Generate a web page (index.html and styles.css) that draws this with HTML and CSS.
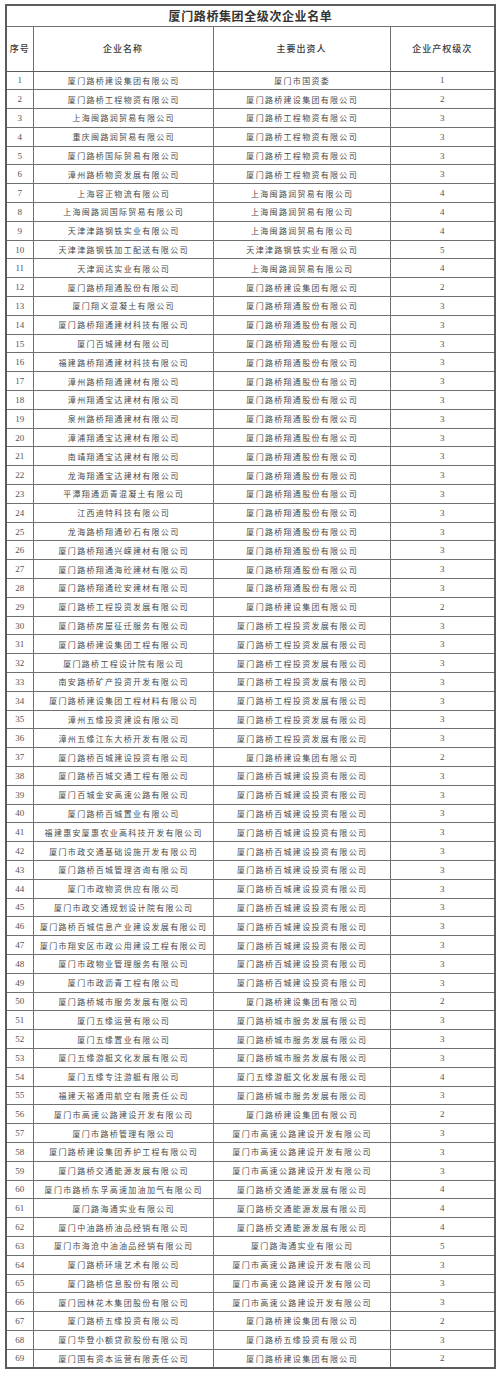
FILE: index.html
```html
<!DOCTYPE html>
<html lang="zh-CN">
<head>
<meta charset="utf-8">
<title>厦门路桥集团全级次企业名单</title>
<link rel="stylesheet" href="styles.css">
</head>
<body>
<table class="list">
<colgroup>
<col class="c-no"><col class="c-name"><col class="c-owner"><col class="c-level">
</colgroup>
<thead>
<tr class="title-row"><th colspan="4" class="title">厦门路桥集团全级次企业名单</th></tr>
<tr class="head-row"><th>序号</th><th>企业名称</th><th>主要出资人</th><th>企业产权级次</th></tr>
</thead>
<tbody>
<tr><td class="num">1</td><td>厦门路桥建设集团有限公司</td><td>厦门市国资委</td><td class="num">1</td></tr>
<tr><td class="num">2</td><td>厦门路桥工程物资有限公司</td><td>厦门路桥建设集团有限公司</td><td class="num">2</td></tr>
<tr><td class="num">3</td><td>上海闽路润贸易有限公司</td><td>厦门路桥工程物资有限公司</td><td class="num">3</td></tr>
<tr><td class="num">4</td><td>重庆闽路润贸易有限公司</td><td>厦门路桥工程物资有限公司</td><td class="num">3</td></tr>
<tr><td class="num">5</td><td>厦门路桥国际贸易有限公司</td><td>厦门路桥工程物资有限公司</td><td class="num">3</td></tr>
<tr><td class="num">6</td><td>漳州路桥物资发展有限公司</td><td>厦门路桥工程物资有限公司</td><td class="num">3</td></tr>
<tr><td class="num">7</td><td>上海容正物流有限公司</td><td>上海闽路润贸易有限公司</td><td class="num">4</td></tr>
<tr><td class="num">8</td><td>上海闽路润国际贸易有限公司</td><td>上海闽路润贸易有限公司</td><td class="num">4</td></tr>
<tr><td class="num">9</td><td>天津津路钢铁实业有限公司</td><td>上海闽路润贸易有限公司</td><td class="num">4</td></tr>
<tr><td class="num">10</td><td>天津津路钢铁加工配送有限公司</td><td>天津津路钢铁实业有限公司</td><td class="num">5</td></tr>
<tr><td class="num">11</td><td>天津润达实业有限公司</td><td>上海闽路润贸易有限公司</td><td class="num">4</td></tr>
<tr><td class="num">12</td><td>厦门路桥翔通股份有限公司</td><td>厦门路桥建设集团有限公司</td><td class="num">2</td></tr>
<tr><td class="num">13</td><td>厦门翔义混凝土有限公司</td><td>厦门路桥翔通股份有限公司</td><td class="num">3</td></tr>
<tr><td class="num">14</td><td>厦门路桥翔通建材科技有限公司</td><td>厦门路桥翔通股份有限公司</td><td class="num">3</td></tr>
<tr><td class="num">15</td><td>厦门百城建材有限公司</td><td>厦门路桥翔通股份有限公司</td><td class="num">3</td></tr>
<tr><td class="num">16</td><td>福建路桥翔通建材科技有限公司</td><td>厦门路桥翔通股份有限公司</td><td class="num">3</td></tr>
<tr><td class="num">17</td><td>漳州路桥翔通建材有限公司</td><td>厦门路桥翔通股份有限公司</td><td class="num">3</td></tr>
<tr><td class="num">18</td><td>漳州翔通宝达建材有限公司</td><td>厦门路桥翔通股份有限公司</td><td class="num">3</td></tr>
<tr><td class="num">19</td><td>泉州路桥翔通建材有限公司</td><td>厦门路桥翔通股份有限公司</td><td class="num">3</td></tr>
<tr><td class="num">20</td><td>漳浦翔通宝达建材有限公司</td><td>厦门路桥翔通股份有限公司</td><td class="num">3</td></tr>
<tr><td class="num">21</td><td>南靖翔通宝达建材有限公司</td><td>厦门路桥翔通股份有限公司</td><td class="num">3</td></tr>
<tr><td class="num">22</td><td>龙海翔通宝达建材有限公司</td><td>厦门路桥翔通股份有限公司</td><td class="num">3</td></tr>
<tr><td class="num">23</td><td>平潭翔通沥青混凝土有限公司</td><td>厦门路桥翔通股份有限公司</td><td class="num">3</td></tr>
<tr><td class="num">24</td><td>江西迪特科技有限公司</td><td>厦门路桥翔通股份有限公司</td><td class="num">3</td></tr>
<tr><td class="num">25</td><td>龙海路桥翔通砂石有限公司</td><td>厦门路桥翔通股份有限公司</td><td class="num">3</td></tr>
<tr><td class="num">26</td><td>厦门路桥翔通兴嵘建材有限公司</td><td>厦门路桥翔通股份有限公司</td><td class="num">3</td></tr>
<tr><td class="num">27</td><td>厦门路桥翔通海砼建材有限公司</td><td>厦门路桥翔通股份有限公司</td><td class="num">3</td></tr>
<tr><td class="num">28</td><td>厦门路桥翔通砼安建材有限公司</td><td>厦门路桥翔通股份有限公司</td><td class="num">3</td></tr>
<tr><td class="num">29</td><td>厦门路桥工程投资发展有限公司</td><td>厦门路桥建设集团有限公司</td><td class="num">2</td></tr>
<tr><td class="num">30</td><td>厦门路桥房屋征迁服务有限公司</td><td>厦门路桥工程投资发展有限公司</td><td class="num">3</td></tr>
<tr><td class="num">31</td><td>厦门路桥建设集团工程有限公司</td><td>厦门路桥工程投资发展有限公司</td><td class="num">3</td></tr>
<tr><td class="num">32</td><td>厦门路桥工程设计院有限公司</td><td>厦门路桥工程投资发展有限公司</td><td class="num">3</td></tr>
<tr><td class="num">33</td><td>南安路桥矿产投资开发有限公司</td><td>厦门路桥工程投资发展有限公司</td><td class="num">3</td></tr>
<tr><td class="num">34</td><td>厦门路桥建设集团工程材料有限公司</td><td>厦门路桥工程投资发展有限公司</td><td class="num">3</td></tr>
<tr><td class="num">35</td><td>漳州五缘投资建设有限公司</td><td>厦门路桥工程投资发展有限公司</td><td class="num">3</td></tr>
<tr><td class="num">36</td><td>漳州五缘江东大桥开发有限公司</td><td>厦门路桥工程投资发展有限公司</td><td class="num">3</td></tr>
<tr><td class="num">37</td><td>厦门路桥百城建设投资有限公司</td><td>厦门路桥建设集团有限公司</td><td class="num">2</td></tr>
<tr><td class="num">38</td><td>厦门路桥百城交通工程有限公司</td><td>厦门路桥百城建设投资有限公司</td><td class="num">3</td></tr>
<tr><td class="num">39</td><td>厦门百城金安高速公路有限公司</td><td>厦门路桥百城建设投资有限公司</td><td class="num">3</td></tr>
<tr><td class="num">40</td><td>厦门路桥百城置业有限公司</td><td>厦门路桥百城建设投资有限公司</td><td class="num">3</td></tr>
<tr><td class="num">41</td><td>福建惠安厦惠农业高科技开发有限公司</td><td>厦门路桥百城建设投资有限公司</td><td class="num">3</td></tr>
<tr><td class="num">42</td><td>厦门市政交通基础设施开发有限公司</td><td>厦门路桥百城建设投资有限公司</td><td class="num">3</td></tr>
<tr><td class="num">43</td><td>厦门路桥百城管理咨询有限公司</td><td>厦门路桥百城建设投资有限公司</td><td class="num">3</td></tr>
<tr><td class="num">44</td><td>厦门市政物资供应有限公司</td><td>厦门路桥百城建设投资有限公司</td><td class="num">3</td></tr>
<tr><td class="num">45</td><td>厦门市政交通规划设计院有限公司</td><td>厦门路桥百城建设投资有限公司</td><td class="num">3</td></tr>
<tr><td class="num">46</td><td>厦门路桥百城信息产业建设发展有限公司</td><td>厦门路桥百城建设投资有限公司</td><td class="num">3</td></tr>
<tr><td class="num">47</td><td>厦门市翔安区市政公用建设工程有限公司</td><td>厦门路桥百城建设投资有限公司</td><td class="num">3</td></tr>
<tr><td class="num">48</td><td>厦门市政物业管理服务有限公司</td><td>厦门路桥百城建设投资有限公司</td><td class="num">3</td></tr>
<tr><td class="num">49</td><td>厦门市政沥青工程有限公司</td><td>厦门路桥百城建设投资有限公司</td><td class="num">3</td></tr>
<tr><td class="num">50</td><td>厦门路桥城市服务发展有限公司</td><td>厦门路桥建设集团有限公司</td><td class="num">2</td></tr>
<tr><td class="num">51</td><td>厦门五缘运营有限公司</td><td>厦门路桥城市服务发展有限公司</td><td class="num">3</td></tr>
<tr><td class="num">52</td><td>厦门五缘置业有限公司</td><td>厦门路桥城市服务发展有限公司</td><td class="num">3</td></tr>
<tr><td class="num">53</td><td>厦门五缘游艇文化发展有限公司</td><td>厦门路桥城市服务发展有限公司</td><td class="num">3</td></tr>
<tr><td class="num">54</td><td>厦门五缘专注游艇有限公司</td><td>厦门五缘游艇文化发展有限公司</td><td class="num">4</td></tr>
<tr><td class="num">55</td><td>福建天裕通用航空有限责任公司</td><td>厦门路桥城市服务发展有限公司</td><td class="num">3</td></tr>
<tr><td class="num">56</td><td>厦门市高速公路建设开发有限公司</td><td>厦门路桥建设集团有限公司</td><td class="num">2</td></tr>
<tr><td class="num">57</td><td>厦门市路桥管理有限公司</td><td>厦门市高速公路建设开发有限公司</td><td class="num">3</td></tr>
<tr><td class="num">58</td><td>厦门路桥建设集团养护工程有限公司</td><td>厦门市高速公路建设开发有限公司</td><td class="num">3</td></tr>
<tr><td class="num">59</td><td>厦门路桥交通能源发展有限公司</td><td>厦门市高速公路建设开发有限公司</td><td class="num">3</td></tr>
<tr><td class="num">60</td><td>厦门市路桥东孚高速加油加气有限公司</td><td>厦门路桥交通能源发展有限公司</td><td class="num">4</td></tr>
<tr><td class="num">61</td><td>厦门路海通实业有限公司</td><td>厦门路桥交通能源发展有限公司</td><td class="num">4</td></tr>
<tr><td class="num">62</td><td>厦门中油路桥油品经销有限公司</td><td>厦门路桥交通能源发展有限公司</td><td class="num">4</td></tr>
<tr><td class="num">63</td><td>厦门市海沧中油油品经销有限公司</td><td>厦门路海通实业有限公司</td><td class="num">5</td></tr>
<tr><td class="num">64</td><td>厦门路桥环境艺术有限公司</td><td>厦门市高速公路建设开发有限公司</td><td class="num">3</td></tr>
<tr><td class="num">65</td><td>厦门路桥信息股份有限公司</td><td>厦门市高速公路建设开发有限公司</td><td class="num">3</td></tr>
<tr><td class="num">66</td><td>厦门园林花木集团股份有限公司</td><td>厦门市高速公路建设开发有限公司</td><td class="num">3</td></tr>
<tr><td class="num">67</td><td>厦门路桥五缘投资有限公司</td><td>厦门路桥建设集团有限公司</td><td class="num">2</td></tr>
<tr><td class="num">68</td><td>厦门华登小额贷款股份有限公司</td><td>厦门路桥五缘投资有限公司</td><td class="num">3</td></tr>
<tr><td class="num">69</td><td>厦门国有资本运营有限责任公司</td><td>厦门路桥建设集团有限公司</td><td class="num">2</td></tr>
</tbody>
</table>
</body>
</html>
```

FILE: styles.css
```css
html, body {
  margin: 0;
  padding: 0;
  background: #ffffff;
}

body {
  font-family: "Liberation Serif", "Noto Sans CJK SC", serif;
  color: #4a4a4a;
  padding: 4px 0 0 5px;
}

.list {
  border-collapse: collapse;
  table-layout: fixed;
  width: 489px;
  border: 2px solid #5c5c5c;
}

.c-no { width: 27px; }
.c-name { width: 180px; }
.c-owner { width: 177px; }
.c-level { width: 105px; }

.list th,
.list td {
  border: 1px solid #707070;
  padding: 0;
  text-align: center;
  vertical-align: middle;
  white-space: nowrap;
  overflow: hidden;
}

.title-row { height: 21px; }

.list th.title {
  font-size: 12px;
  font-weight: 700;
  letter-spacing: 0.6px;
  color: #333333;
  border-top-color: #c8c8c8;
  border-bottom: 1px solid #707070;
}

.head-row { height: 45px; }

.head-row th {
  font-size: 9px;
  font-weight: 500;
  letter-spacing: 1px;
  color: #3a3a3a;
  border-bottom: 1.5px solid #5c5c5c;
}

.list tbody tr { height: 18.81px; }

.list tbody td {
  font-size: 8px;
  letter-spacing: 1.3px;
  padding-left: 1.3px;
}

.list tbody td.num {
  font-size: 9px;
  letter-spacing: 0;
  padding-left: 0;
  color: #555555;
}
```
